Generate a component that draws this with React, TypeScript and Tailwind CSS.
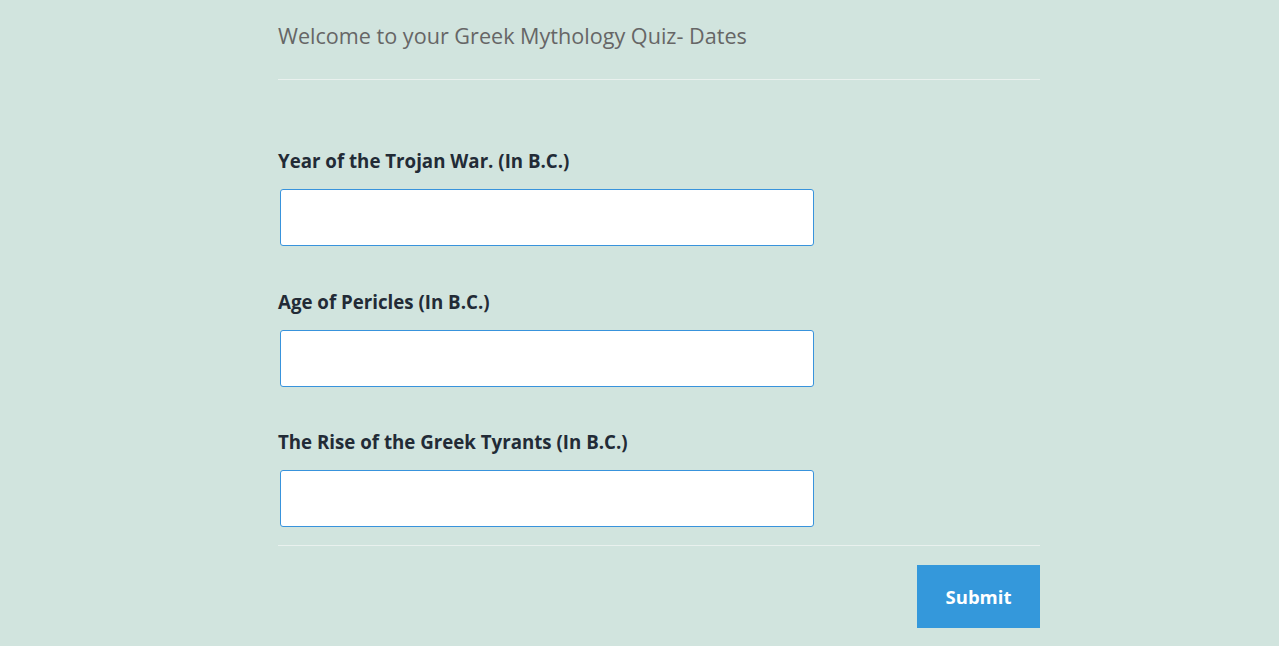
export default function App() {
  const questions = [
    "Year of the Trojan War. (In B.C.)",
    "Age of Pericles (In B.C.)",
    "The Rise of the Greek Tyrants (In B.C.)",
  ];
  return (
    <div
      className="min-h-[646px] w-full bg-[#d1e4de] overflow-hidden"
      style={{ fontFamily: '"Open Sans", "Noto Sans", sans-serif' }}
    >
      <div className="ml-[278px] w-[762px]">
        <div className="h-[80px] pt-[21px] border-b border-[#e9f1ee]">
          <h1 className="text-[21.6px] leading-[30px] text-[#666666] font-normal">
            Welcome to your Greek Mythology Quiz- Dates
          </h1>
        </div>
        <div className="pt-[67px] pb-[18px] border-b border-[#e9f1ee] flex flex-col gap-[41.5px]">
          {questions.map((q) => (
            <div key={q} className="flex flex-col">
              <label className="text-[18.7px] leading-[28px] font-bold text-[#222b36]">
                {q}
              </label>
              <input
                type="text"
                className="mt-[14px] ml-[2px] w-[534px] h-[57px] bg-white border border-[#3893dc] rounded-[3px] outline-none"
              />
            </div>
          ))}
        </div>
        <div className="flex justify-end pt-[19px]">
          <button className="w-[123px] h-[63px] bg-[#3498db] text-white text-[18.5px] font-bold">
            Submit
          </button>
        </div>
      </div>
    </div>
  );
}
